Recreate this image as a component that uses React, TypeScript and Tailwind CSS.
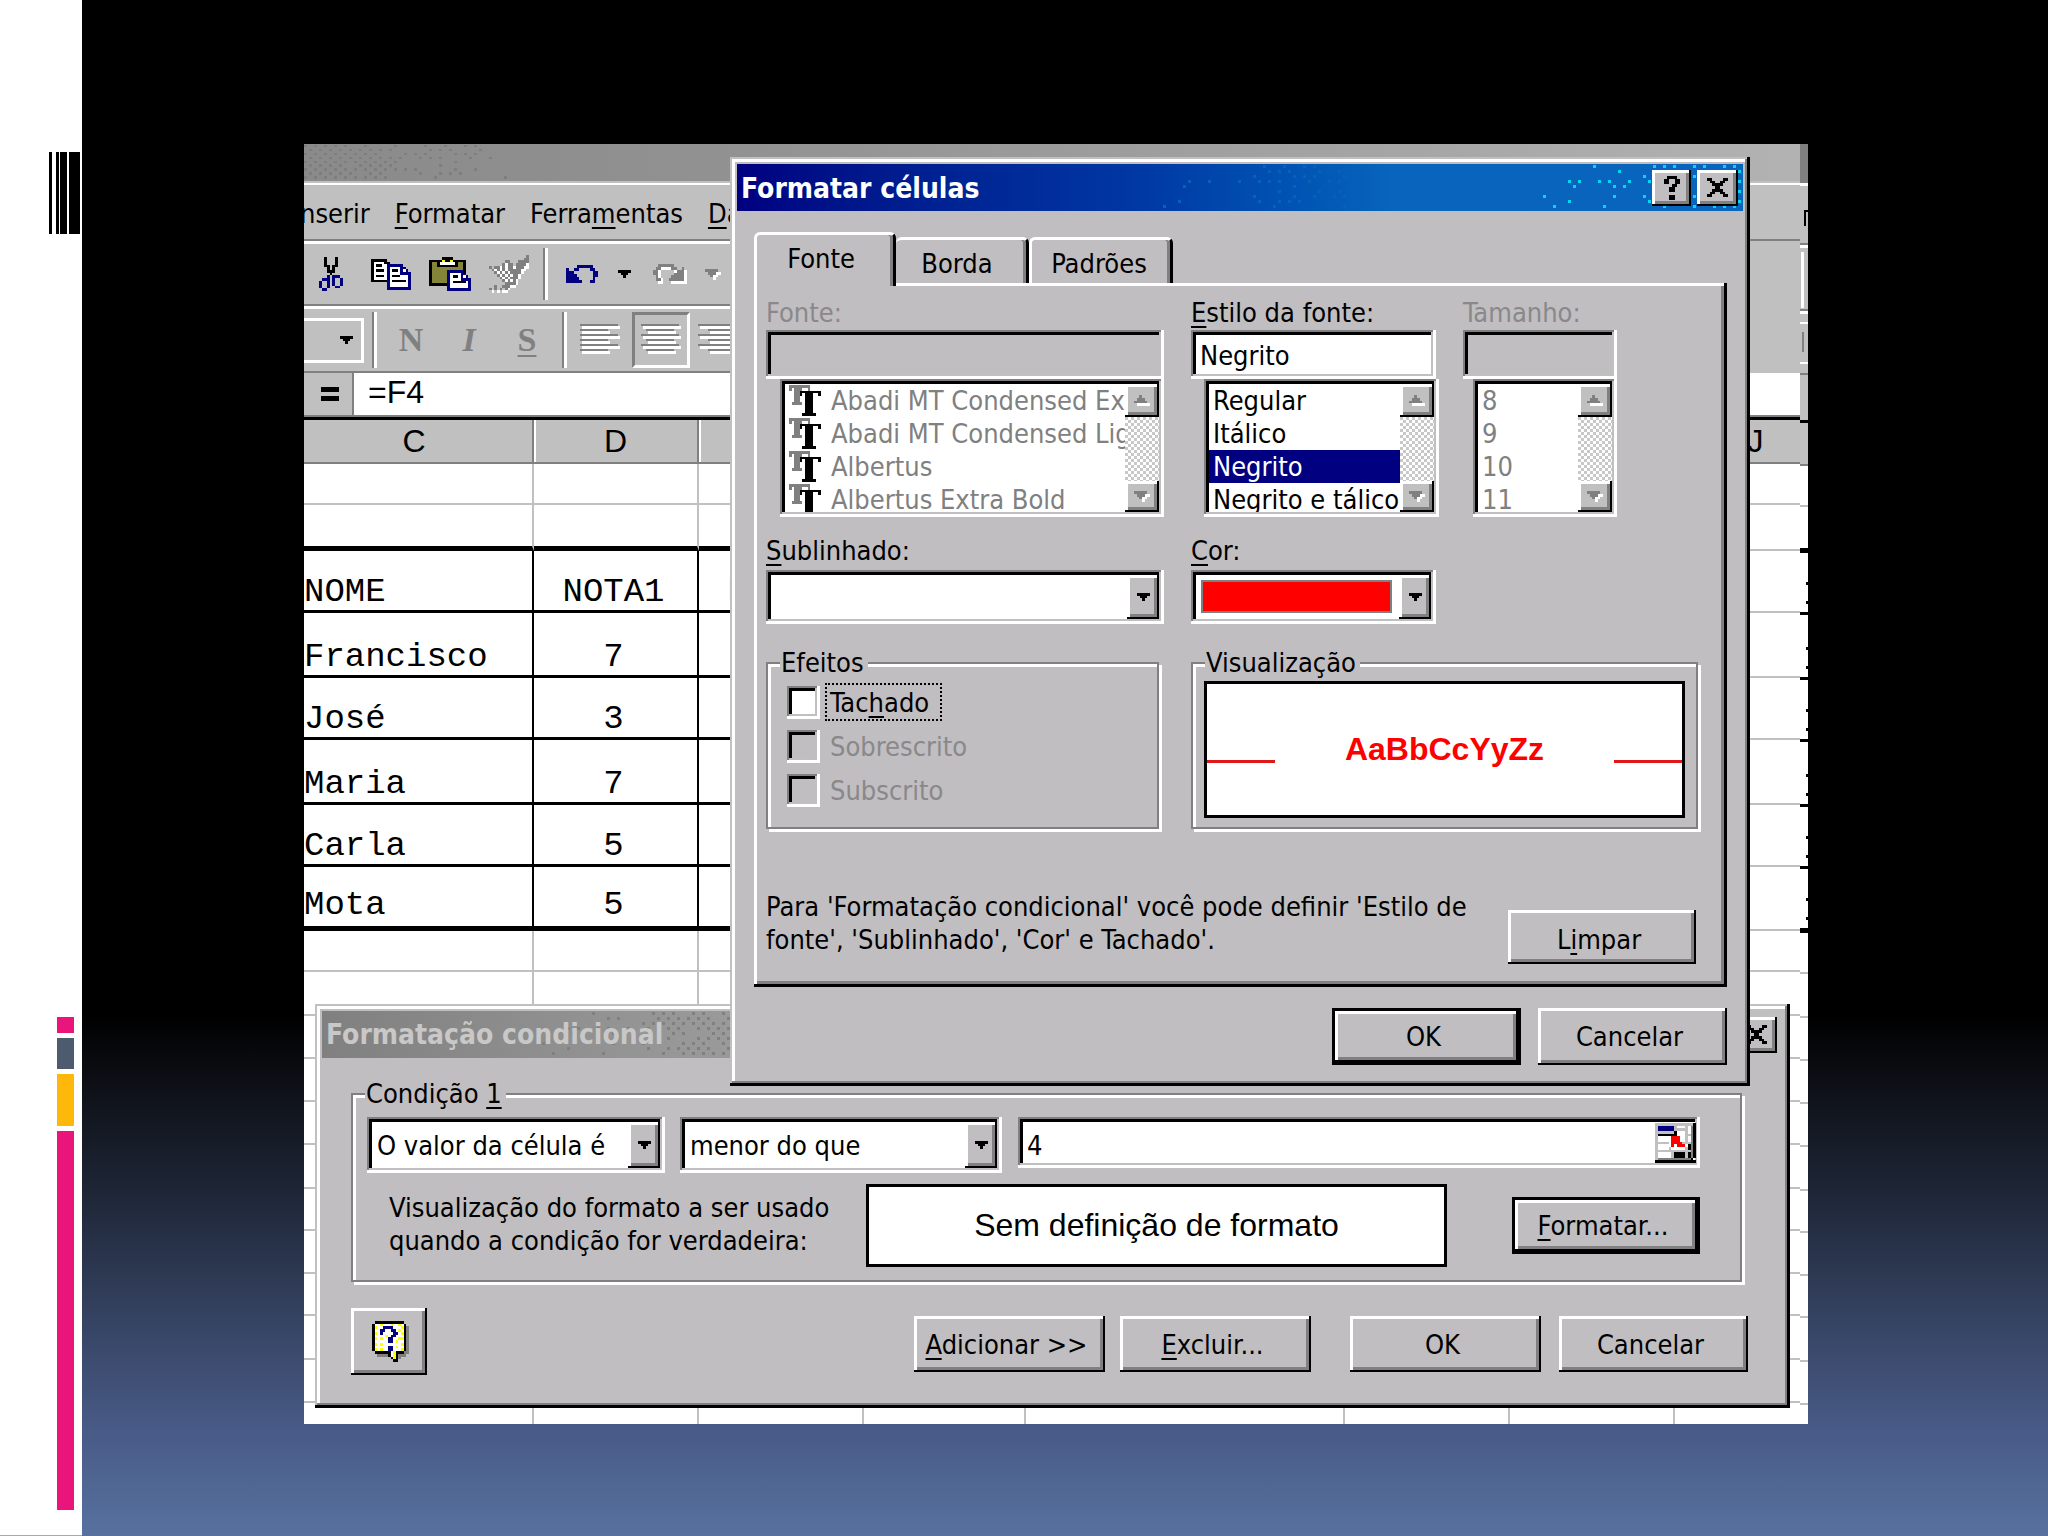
import type { ReactNode } from "react"

const raised = "shadow-[inset_-2px_-2px_0_#000,inset_3px_3px_0_#fff,inset_-5px_-5px_0_#808080]"
const sunken =
  "shadow-[inset_-3px_-3px_0_#fff,inset_2px_2px_0_#808080,inset_-5px_-5px_0_#c0c0c0,inset_5px_5px_0_#000]"
const windowEdge =
  "shadow-[inset_-3px_-3px_0_#000,inset_2px_2px_0_#c0c0c0,inset_-5px_-5px_0_#808080,inset_5px_5px_0_#fff]"
const ui = "font-['DejaVu_Sans_Condensed','Liberation_Sans',sans-serif] text-[27px] leading-[33px]"

const palette: Record<string, string> = {
  k: "#000000",
  w: "#ffffff",
  b: "#000080",
  g: "#808080",
  s: "#808080",
  l: "#c0c0c0",
  o: "#85853a",
  y: "#ffff00",
  r: "#ff0000",
}

const icons = {
  cut: [
    "..k...k..",
    "..k...k..",
    "..k...k..",
    "..kk.kk..",
    "...k.k...",
    "...kkk...",
    "....k....",
    "...b.bbb.",
    ".bbb.b..b",
    "b..b.b..b",
    "b..b.b..b",
    "b..b..bb.",
    ".bb......",
  ],
  copy: [
    "kkkkkk.........",
    "kwwwwkk........",
    "kwkkwwbbbbbb...",
    "kwwwwwbwwwwbb..",
    "kwkkkwbwkkwbwb.",
    "kwwwwwbwwwwbbbb",
    "kwkkkwbwkkkwwwb",
    "kwwwwwbwwwwwwwb",
    "kkkkkkbwkkkkkwb",
    "......bwwwwwwwb",
    "......bwwwwwwwb",
    "......bbbbbbbbb",
  ],
  paste: [
    ".....kkkk.......",
    "kkkkkykkykkkkk..",
    "kookwwwwwwkook..",
    "kookkkkkkkkook..",
    "kooooooooooook..",
    "koooooobbbbbbk..",
    "koooooobwwwwbb..",
    "koooooobwkkwbwb.",
    "koooooobwwwwbbbb",
    "koooooobwkkkkkwb",
    "kkkkkkkbwwwwwwwb",
    ".......bwwwwwwwb",
    ".......bbbbbbbbb",
  ],
  brush: [
    "..............g",
    ".............gg",
    "......gg...gggg",
    ".....gwgg.ggggw",
    "g.ggwgwggwgggww",
    ".gwgwgwgggggww.",
    "..gwgwgwggggw..",
    "...gwgwgwggw...",
    "....gwgwgggw...",
    ".....gwgwgw....",
    "......ggggw....",
    "..g..gggww.....",
    "g.g.g.gw.......",
    ".w.w.ww........",
  ],
  undo: ["....bbbbbb..", "b..bb....bb.", "bbb.......bb", "bbbb......bb", "bbbbb.....b.", "bbbbbb...bb."],
  redo: [
    "..gggggg.....",
    ".ggwwwwgg..g.",
    "ggw.....wgggw",
    "ggw.....ggggw",
    ".gw....gggggw",
    ".ggw..ggggggw",
    "..ww...wwwwww",
  ],
  down: ["kkkkk", ".kkk.", "..k.."],
  downOff: ["ggggg.", ".gggww", "..gww.", "...w.."],
  upOff: ["..g...", ".ggg..", "ggggg.", ".wwwww"],
  close: ["kk....kk", ".kk..kk.", "..kkkk..", "...kk...", "..kkkk..", ".kk..kk.", "kk....kk"],
  question: [".kkkk.", "kk..kk", "kk..kk", "...kk.", "..kk..", "..kk..", "......", "..kk..", "..kk.."],
  trueType: [
    "gggggggg....",
    "g.ggg..g....",
    "..ggkkkkkkkk",
    "..ggk.kkk..k",
    "..gg..kkk...",
    "..gg..kkk...",
    ".gggg.kkk...",
    "......kkk...",
    "......kkk...",
    "......kkk...",
    ".....kkkkk..",
  ],
  help: [
    ".kkkkkkkkkkk..",
    "kwwywwwywwywk.",
    "kywwbbbbwwwyks",
    "kwwbbwwbbwywks",
    "kywbwwwwbbwyks",
    "kwwwwywbbwwwks",
    "kywywwbbwwyyks",
    "kwwwwwbbwywwks",
    "kywywwwwwwwyks",
    "kwwwwwbbwywwks",
    "kywywwbbwwwyks",
    ".kkkkkkwykkkss",
    "..sssskwyksss.",
    ".......kyks...",
    "........kk....",
  ],
  range: [
    "llllllllllllllk",
    "lbbbbbblwwwlwsk",
    "lbbbbbblllllwsk",
    "lllllllkwwwlwsk",
    "lkkkkkkkwwwllsk",
    "lwwwwwrrrwwlwsk",
    "lwwwwwrrrwwlwsk",
    "lllllwrrrrlllsk",
    "lwwwwwrwrrrwksk",
    "lwwwwlwwwwwlksk",
    "lllllllllllllsk",
    "lwwwwwlkkkklksk",
    "lwwwwwlkkkklksk",
    "lssssssssssssk.",
    "kkkkkkkkkkkkkkk",
  ],
}

function Pixels({ name, className }: { name: keyof typeof icons; className: string }) {
  const rows = icons[name]
  return (
    <svg
      aria-hidden="true"
      viewBox={`0 0 ${rows[0].length} ${rows.length}`}
      preserveAspectRatio="none"
      shapeRendering="crispEdges"
      className={`shrink-0 ${className}`}
    >
      {rows.map((row, y) =>
        row
          .split("")
          .map((c, x) => (c === "." ? null : <rect key={`${x}-${y}`} x={x} y={y} width="1" height="1" fill={palette[c]} />)),
      )}
    </svg>
  )
}

function AlignIcon({ align }: { align: "left" | "center" | "right" }) {
  const lines = [38, 28, 38, 28, 38, 28]
  return (
    <svg aria-hidden="true" viewBox="0 0 40 32" shapeRendering="crispEdges" className="h-8 w-10 shrink-0">
      {lines.map((w, i) => {
        const x = align === "left" ? 0 : align === "right" ? 38 - w : (38 - w) / 2
        return (
          <g key={i}>
            <rect x={x + 2} y={i * 5 + 2} width={w} height="3" fill="#fff" />
            <rect x={x} y={i * 5} width={w} height="2" fill="#808080" />
          </g>
        )
      })}
    </svg>
  )
}

// 16-colour dithering of the caption gradients; density is given at both ends
function Dither({ from, to, color, className }: { from: number; to: number; color: string; className: string }) {
  const dots: ReactNode[] = []
  for (let y = 0; y < 9; y++) {
    for (let x = 0; x < 42; x++) {
      const s = Math.sin(x * 12.9898 + y * 78.233) * 43758.5453
      const noise = s - Math.floor(s)
      if ((x + y) % 2 === 0 && noise < from + ((to - from) * x) / 42) {
        dots.push(<rect key={`${x}-${y}`} x={x * 5} y={y * 5 + 1} width="3" height="3" fill={color} />)
      }
    }
  }
  return (
    <svg
      aria-hidden="true"
      viewBox="0 0 210 47"
      preserveAspectRatio="none"
      shapeRendering="crispEdges"
      className={`pointer-events-none absolute top-0 h-full ${className}`}
    >
      {dots}
    </svg>
  )
}

function Button({ children, isDefault, className = "" }: { children: ReactNode; isDefault?: boolean; className?: string }) {
  return (
    <button
      type="button"
      className={`flex items-center justify-center bg-[#c0bec0] pr-1.5 ${raised} ${isDefault ? "border-[3px] border-black" : ""} ${className}`}
    >
      {children}
    </button>
  )
}

function CaptionButton({ label, icon, className }: { label: string; icon: "close" | "question"; className: string }) {
  return (
    <button type="button" aria-label={label} className={`relative flex h-9 items-center justify-center bg-[#c0bec0] ${raised} ${className}`}>
      <Pixels name={icon} className={icon === "close" ? "h-[19px] w-[21px]" : "h-6 w-4"} />
    </button>
  )
}

function Combo({ id, options, className, children }: { id: string; options: string[]; className: string; children?: ReactNode }) {
  return (
    <div className={`relative bg-white ${sunken} ${className}`}>
      <select id={id} aria-label={id} className="size-full appearance-none bg-transparent pl-[10px] outline-none">
        {options.map((o) => (
          <option key={o}>{o}</option>
        ))}
      </select>
      {children}
      <span className={`pointer-events-none absolute top-[5px] right-[5px] bottom-[5px] flex w-8 items-center justify-center bg-[#c0bec0] ${raised}`}>
        <Pixels name="down" className="h-2 w-[13px]" />
      </span>
    </div>
  )
}

function ListBox({
  label,
  items,
  selected,
  disabled,
  icon,
  className,
}: {
  label: string
  items: string[]
  selected?: string
  disabled?: boolean
  icon?: boolean
  className: string
}) {
  return (
    <div className={`flex h-[138px] bg-white p-[5px] ${sunken} ${className}`}>
      <ul role="listbox" aria-label={label} aria-disabled={disabled} className="min-w-0 flex-1 overflow-hidden">
        {items.map((item) => (
          <li
            key={item}
            role="option"
            aria-selected={item === selected}
            className={`flex h-[33px] items-center gap-[10px] pl-1 whitespace-nowrap ${
              item === selected ? "bg-[#000080] text-white" : disabled ? "text-[#808080]" : ""
            }`}
          >
            {icon && <Pixels name="trueType" className="h-[31px] w-8" />}
            {item}
          </li>
        ))}
      </ul>
      <div className="flex w-[34px] flex-col justify-between bg-[repeating-conic-gradient(#c8c8c8_0_25%,#fff_0_50%)] bg-[length:6px_6px]">
        <button type="button" aria-label="Rolar para cima" className={`flex h-[33px] items-center justify-center bg-[#c0c0c0] ${raised}`}>
          <Pixels name="upOff" className="h-[11px] w-4" />
        </button>
        <button type="button" aria-label="Rolar para baixo" className={`flex h-[31px] items-center justify-center bg-[#c0c0c0] ${raised}`}>
          <Pixels name="downOff" className="h-[11px] w-4" />
        </button>
      </div>
    </div>
  )
}

function GroupBox({ legend, className, children }: { legend: ReactNode; className: string; children: ReactNode }) {
  return (
    <fieldset
      className={`min-w-0 border-2 border-[#808080] shadow-[inset_3px_3px_0_#fff,3px_3px_0_#fff] ${className}`}
    >
      <legend className="ml-3 bg-[#c0bec0] pr-1 pl-px">{legend}</legend>
      {children}
    </fieldset>
  )
}

function CheckRow({ label, disabled, focused }: { label: ReactNode; disabled?: boolean; focused?: boolean }) {
  return (
    <label className={`flex h-11 items-center gap-[5px] ${disabled ? "text-[#8a888a]" : ""}`}>
      <input
        type="checkbox"
        disabled={disabled}
        className={`size-[33px] appearance-none ${disabled ? "bg-[#c0bec0]" : "bg-white"} ${sunken}`}
      />
      <span className={`border-2 pt-px pr-[11px] pl-[3px] ${focused ? "border-dotted border-black" : "border-transparent"}`}>{label}</span>
    </label>
  )
}

const Separator = ({ className }: { className: string }) => (
  <span className={`w-[5px] shrink-0 self-stretch border-r-[3px] border-l-2 border-r-white border-l-[#808080] ${className}`} />
)

const cellRows = [
  { h: "h-[41px]" },
  { h: "h-[46px]", thick: true },
  { h: "h-[62px]", data: ["NOME", "NOTA1", "NOTA2"] },
  { h: "h-[65px]", data: ["Francisco", "7", ""] },
  { h: "h-[62px]", data: ["José", "3", ""] },
  { h: "h-[65px]", data: ["Maria", "7", ""] },
  { h: "h-[62px]", data: ["Carla", "5", ""] },
  { h: "h-[64px]", data: ["Mota", "5", ""], thick: true },
  { h: "h-[41px]" },
  { h: "h-[44px]" },
  { h: "h-[43px]" },
  { h: "h-[43px]" },
  { h: "h-[43px]" },
  { h: "h-[44px]" },
  { h: "h-[42px]" },
  { h: "h-[43px]" },
  { h: "h-[42px]" },
  { h: "h-[44px]" },
  { h: "h-[43px]" },
]

function Sheet() {
  const columns = ["C", "D", "E", "F", "G", "H", "I", "J"]
  return (
    <table className="w-full table-fixed border-separate border-spacing-0 bg-white">
      <colgroup>
        <col className="w-[230px]" />
        <col className="w-[165px]" />
        <col className="w-[165px]" />
        <col className="w-[162px]" />
        <col className="w-[319px]" />
        <col className="w-[165px]" />
        <col className="w-[165px]" />
        <col />
      </colgroup>
      <thead>
        <tr className="h-11">
          {columns.map((c) => (
            <th
              key={c}
              scope="col"
              className={`border-r-2 border-b-2 border-[#808080] bg-[#c0c0c0] p-0 font-['Liberation_Sans',sans-serif] text-[32px] leading-8 font-normal last:border-r-0 last:pl-9 ${
                c === "C" ? "pr-2" : "shadow-[inset_2px_0_0_#fff]"
              }`}
            >
              {c}
            </th>
          ))}
        </tr>
      </thead>
      <tbody className="font-['Liberation_Mono',monospace] text-[34px] leading-[34px]">
        {cellRows.map((row, r) => (
          <tr key={r} className={row.h}>
            {columns.map((c, i) => {
              const last = i === columns.length - 1
              const bottom = last
                ? "border-b-2 border-b-[#c0c0c0]"
                : row.thick
                  ? "border-b-[5px] border-b-black"
                  : row.data
                    ? "border-b-3 border-b-black"
                    : "border-b-2 border-b-[#c0c0c0]"
              const right = last ? "" : row.data ? "border-r-2 border-r-black" : "border-r-2 border-r-[#c0c0c0]"
              return (
                <td
                  key={c}
                  className={`p-0 align-bottom ${row.thick ? "pb-1" : "pb-px"} ${i ? "pr-1 text-center" : ""} ${bottom} ${right}`}
                >
                  {row.data?.[i]}
                </td>
              )
            })}
          </tr>
        ))}
        <tr className="h-[21px]">
          {columns.map((c) => (
            <td key={c} className="border-r-2 border-[#c0c0c0] p-0 last:border-r-0" />
          ))}
        </tr>
      </tbody>
    </table>
  )
}

// the sliver of the window that shows past the last column
function EdgeStrip() {
  return (
    <div aria-hidden="true" className="flex w-2 shrink-0 flex-col overflow-hidden bg-white">
      <div className="h-[39px] bg-[#808080]" />
      <div className="flex h-[62px] flex-col items-end border-t-3 border-b-2 border-t-white border-b-[#808080] bg-[#c0c0c0] pt-6">
        <span className="h-4 w-1 border-t-2 border-l-2 border-black" />
      </div>
      <div className="h-[66px] border-t-3 border-b-2 border-t-white border-b-[#808080] bg-[#c0c0c0] pt-1 pl-px">
        <span className="block h-14 w-[3px] bg-white" />
      </div>
      <div className="h-[64px] border-t-3 border-b-2 border-t-white border-b-[#808080] bg-[#c0c0c0] pt-2">
        <span className="block h-[42px] border-y-2 border-white pt-2">
          <span className="block h-5 w-1 border-r-2 border-[#808080]" />
        </span>
      </div>
      <div className="h-[48px] border-b-3 border-black bg-[#c0c0c0]" />
      <div className="h-[43px] border-b-2 border-[#808080] bg-[#c0c0c0]" />
      {cellRows.map((row, i) => (
        <div
          key={i}
          className={`flex flex-col items-end justify-end gap-4 pb-2 ${row.h} ${
            row.thick ? "border-b-[5px] border-black" : row.data ? "border-b-3 border-black" : "border-b-2 border-[#c0c0c0]"
          }`}
        >
          {row.data && <span className="h-[3px] w-0.5 bg-black" />}
          {row.data && <span className="h-[3px] w-0.5 bg-black" />}
        </div>
      ))}
    </div>
  )
}

function Excel() {
  return (
    <div className={`min-w-0 flex-1 overflow-hidden bg-[#c0c0c0] ${ui}`}>
      <div className="relative h-[39px] border-b-2 border-[#c0c0c0] bg-linear-to-r from-[#8a8a8a] via-[#929292] via-30% to-[#b2b2b2]">
        <Dither from={1.2} to={0} color="#7e7e7e" className="left-0 w-[210px]" />
      </div>
      <nav className="-ml-1 flex h-[58px] items-center gap-[25px] border-t-2 border-b-2 border-t-white border-b-[#808080] pt-0.5">
        <button type="button">nserir</button>
        <button type="button">
          <u>F</u>ormatar
        </button>
        <button type="button">
          Ferra<u>m</u>entas
        </button>
        <button type="button">
          <u>D</u>ados
        </button>
      </nav>
      <div className="mr-24 flex h-[65px] items-center border-t-3 border-b-2 border-t-white border-b-[#808080] pl-[15px]">
        <button type="button" aria-label="Recortar">
          <Pixels name="cut" className="h-[34px] w-6" />
        </button>
        <button type="button" aria-label="Copiar" className="ml-7">
          <Pixels name="copy" className="h-[31px] w-10" />
        </button>
        <button type="button" aria-label="Colar" className="ml-[18px]">
          <Pixels name="paste" className="h-[34px] w-[42px]" />
        </button>
        <button type="button" aria-label="Pincel" disabled className="ml-[18px]">
          <Pixels name="brush" className="h-[38px] w-10" />
        </button>
        <Separator className="my-1 ml-[14px]" />
        <button type="button" aria-label="Desfazer" className="ml-[18px]">
          <Pixels name="undo" className="h-[18px] w-8" />
        </button>
        <Pixels name="down" className="ml-5 h-2 w-[13px]" />
        <button type="button" aria-label="Refazer" disabled className="ml-[22px]">
          <Pixels name="redo" className="h-5 w-[34px]" />
        </button>
        <Pixels name="downOff" className="ml-[18px] h-[11px] w-4" />
      </div>
      <div className="mr-24 flex h-[67px] items-center border-t-3 border-b-2 border-t-white border-b-[#808080]">
        <button type="button" aria-label="Tamanho" className="flex h-[45px] w-[60px] items-center justify-end border-[3px] border-l-0 border-white pr-2">
          <Pixels name="down" className="h-2 w-[13px]" />
        </button>
        <Separator className="my-[3px] ml-2" />
        <div className="flex items-center gap-8 pl-[21px] font-['Liberation_Serif',serif] text-[34px] leading-[34px] font-bold text-[#808080] [text-shadow:3px_3px_0_#fff]">
          <button type="button" className="w-[26px]">
            N
          </button>
          <button type="button" className="w-[26px] italic">
            I
          </button>
          <button type="button" className="w-[26px] underline decoration-2 underline-offset-4">
            S
          </button>
        </div>
        <Separator className="my-[3px] ml-[22px]" />
        <button type="button" aria-label="Alinhar à esquerda" className="ml-[13px]">
          <AlignIcon align="left" />
        </button>
        <button
          type="button"
          aria-label="Centralizar"
          className="ml-3 flex h-14 w-[58px] items-center justify-center border-[3px] border-t-[#808080] border-r-white border-b-white border-l-[#808080]"
        >
          <AlignIcon align="center" />
        </button>
        <button type="button" aria-label="Alinhar à direita" className="ml-2">
          <AlignIcon align="right" />
        </button>
      </div>
      <div className="flex h-[47px] border-b-[3px] border-black">
        <button
          type="button"
          aria-label="Editar fórmula"
          className="flex w-[50px] items-center justify-end border-r-2 border-b-2 border-[#808080] pr-[13px]"
        >
          <span className="h-[14px] w-[18px] border-y-[5px] border-black" />
        </button>
        <input
          aria-label="Fórmula"
          defaultValue="=F4"
          className="min-w-0 flex-1 border-b-2 border-[#808080] bg-white pb-1 pl-[14px] font-['Liberation_Sans',sans-serif] text-[32px] leading-8 outline-none"
        />
      </div>
      <Sheet />
    </div>
  )
}

function ConditionalDialog() {
  return (
    <section
      aria-label="Formatação condicional"
      className={`absolute top-[860px] left-[11px] w-[1475px] bg-[#c0bec0] p-[7px] pb-[33px] ${windowEdge} ${ui}`}
    >
      <header className="relative flex h-[47px] items-center justify-between bg-linear-to-r from-[#808080] via-[#989898] via-25% to-[#c0c0c0] pr-[6px] pl-1">
        <Dither from={0} to={1} color="#808080" className="left-[210px] w-[210px]" />
        <h2 className="relative text-[28px] font-bold text-[#c8c8c8]">Formatação condicional</h2>
        <CaptionButton label="Fechar" icon="close" className="w-[41px]" />
      </header>
      <div className="mt-[19px] mr-[41px] ml-[29px]">
        <GroupBox
          className="h-[205px]"
          legend={
            <>
              Condição <u>1</u>
            </>
          }
        >
          <div className="mt-[7px] flex items-start pl-[14px]">
            <Combo id="Tipo" options={["O valor da célula é", "A fórmula é"]} className="h-14 w-[298px]" />
            <Combo id="Operador" options={["menor do que", "maior do que"]} className="ml-[15px] h-14 w-[322px]" />
            <div className={`ml-4 flex h-[51px] w-[682px] items-center bg-white pr-1 ${sunken}`}>
              <input aria-label="Valor" defaultValue="4" className="min-w-0 flex-1 bg-transparent pt-1.5 pl-[9px] outline-none" />
              <button type="button" aria-label="Selecionar intervalo">
                <Pixels name="range" className="h-10 w-[41px]" />
              </button>
            </div>
          </div>
          <div className="mt-[11px] flex items-start">
            <p className="mt-[7px] w-[476px] pl-9 whitespace-nowrap">
              Visualização do formato a ser usado
              <br />
              quando a condição for verdadeira:
            </p>
            <div className="ml-[37px] flex h-[83px] w-[581px] items-center justify-center border-[3px] border-black bg-white font-['Liberation_Sans',sans-serif] text-[32px]">
              Sem definição de formato
            </div>
            <Button isDefault className="mt-[13px] ml-[65px] h-[57px] w-[188px]">
              <span>
                <u>F</u>ormatar...
              </span>
            </Button>
          </div>
        </GroupBox>
      </div>
      <footer className="mt-[26px] mr-[35px] ml-[29px] flex">
        <Button className="h-[67px] w-[76px] pl-2">
          <Pixels name="help" className="h-[41px] w-[37px]" />
          <span className="sr-only">Ajuda</span>
        </Button>
        <div className="mt-2 ml-auto flex h-14">
          <Button className="w-[191px]">
            <span>
              <u>A</u>dicionar &gt;&gt;
            </span>
          </Button>
          <Button className="ml-[15px] w-[191px]">
            <span>
              <u>E</u>xcluir...
            </span>
          </Button>
          <Button className="ml-[39px] w-[191px]">OK</Button>
          <Button className="ml-[18px] w-[189px]">Cancelar</Button>
        </div>
      </footer>
    </section>
  )
}

function Tabs() {
  const tab = "rounded-t-md border-t-[3px] border-r-[3px] border-t-white border-r-black bg-[#c0bec0] shadow-[inset_-3px_0_0_#808080]"
  return (
    <div role="tablist" className="flex h-[51px] items-end">
      <button
        type="button"
        role="tab"
        aria-selected="true"
        className={`relative -mb-[3px] h-[54px] w-[142px] border-l-[3px] border-l-white pr-2 pb-1 ${tab}`}
      >
        Fonte
      </button>
      <button type="button" role="tab" aria-selected="false" className={`h-[46px] w-[133px] pt-1 pr-2 ${tab}`}>
        Borda
      </button>
      <button type="button" role="tab" aria-selected="false" className={`h-[46px] w-[144px] border-l-[3px] border-l-white pt-1 pr-1 ${tab}`}>
        Padrões
      </button>
    </div>
  )
}

function FormatCellsDialog() {
  return (
    <section
      aria-label="Formatar células"
      className={`absolute top-[13px] left-[426px] w-[1020px] bg-[#c0bec0] p-[7px] pb-[21px] ${windowEdge} ${ui}`}
    >
      <header className="relative flex h-[47px] items-center bg-linear-to-r from-[#000080] via-[#0038a4] via-40% to-[#0864bc] to-65% pr-[5px] pl-1">
        <Dither from={0} to={0.5} color="#0860b8" className="right-[390px] w-[210px]" />
        <Dither from={0} to={0.9} color="#00d8f4" className="right-0 w-[210px]" />
        <h2 className="relative pt-0.5 text-[28px] font-bold text-white">Formatar células</h2>
        <CaptionButton label="Ajuda" icon="question" className="ml-auto w-[39px]" />
        <CaptionButton label="Fechar" icon="close" className="ml-[6px] w-[41px]" />
      </header>

      <div className="mt-[21px] mr-4 ml-[17px]">
        <Tabs />
        <div className="px-[12px] pt-[13px] pb-[23px] shadow-[inset_-3px_-3px_0_#000,inset_3px_3px_0_#fff,inset_-6px_-6px_0_#808080]">
          <div className="flex">
            <div className="w-[398px]">
              <label htmlFor="fonte" className="block text-[#8a888a]">
                Fonte:
              </label>
              <input id="fonte" disabled className={`mt-px block h-[49px] w-full ${sunken}`} />
              <ListBox
                label="Fontes"
                disabled
                icon
                items={["Abadi MT Condensed Extra Bold", "Abadi MT Condensed Light", "Albertus", "Albertus Extra Bold"]}
                className="ml-[14px]"
              />
            </div>
            <div className="ml-[27px] w-[248px]">
              <label htmlFor="estilo" className="block">
                <u>E</u>stilo da fonte:
              </label>
              <input id="estilo" defaultValue="Negrito" className={`mt-px block h-[49px] w-[245px] bg-white pt-0.5 pl-[9px] outline-none ${sunken}`} />
              <ListBox
                label="Estilos"
                selected="Negrito"
                items={["Regular", "Itálico", "Negrito", "Negrito e tálico"]}
                className="ml-[13px]"
              />
            </div>
            <div className="ml-[24px] w-[154px]">
              <label htmlFor="tamanho" className="block text-[#8a888a]">
                Tamanho:
              </label>
              <input id="tamanho" disabled className={`mt-px block h-[49px] w-full ${sunken}`} />
              <ListBox label="Tamanhos" disabled items={["8", "9", "10", "11"]} className="ml-[10px]" />
            </div>
          </div>

          <div className="mt-[17px] flex">
            <div className="w-[398px]">
              <label htmlFor="sublinhado" className="block">
                <u>S</u>ublinhado:
              </label>
              <Combo id="sublinhado" options={[""]} className="mt-[3px] h-[54px]" />
            </div>
            <div className="ml-[27px] w-[245px]">
              <label htmlFor="cor" className="block">
                <u>C</u>or:
              </label>
              <Combo id="cor" options={[""]} className="mt-[3px] h-[54px]">
                <span className="pointer-events-none absolute top-[10px] right-11 bottom-[11px] left-[10px] border-2 border-[#808080] bg-[#ff0000]" />
              </Combo>
            </div>
          </div>

          <div className="mt-[22px] flex h-[183px]">
            <GroupBox legend="Efeitos" className="w-[393px]">
              <div className="mt-[1px] pl-[19px]">
                <CheckRow
                  focused
                  label={
                    <>
                      Tac<u>h</u>ado
                    </>
                  }
                />
                <CheckRow disabled label="Sobrescrito" />
                <CheckRow disabled label="Subscrito" />
              </div>
            </GroupBox>
            <GroupBox legend="Visualização" className="ml-8 w-[507px]">
              <div className="mt-[2px] mr-[11px] ml-[11px] flex h-[137px] items-center justify-between border-[3px] border-black bg-white">
                <span className="mt-6 h-[3px] w-[68px] bg-[#e01818]" />
                <span className="font-['Liberation_Sans',sans-serif] text-[32px] font-bold text-[#ff0000]">AaBbCcYyZz</span>
                <span className="mt-6 h-[3px] w-[68px] bg-[#e01818]" />
              </div>
            </GroupBox>
          </div>

          <div className="mt-[61px] flex h-[74px] items-end justify-between">
            <p className="self-start whitespace-nowrap">
              Para 'Formatação condicional' você pode definir 'Estilo de
              <br />
              fonte', 'Sublinhado', 'Cor' e Tachado'.
            </p>
            <Button className="mr-[19px] h-[54px] w-[188px] pt-1">
              <span>
                L<u>i</u>mpar
              </span>
            </Button>
          </div>
        </div>

        <footer className="mt-[21px] flex h-[57px] justify-end gap-[17px]">
          <Button isDefault className="w-[189px]">
            OK
          </Button>
          <Button className="w-[189px]">Cancelar</Button>
        </footer>
      </div>
    </section>
  )
}

function Rail() {
  return (
    <aside aria-hidden="true" className="flex w-[82px] shrink-0 flex-col border-b border-[#a8a8a8] bg-white pt-[152px]">
      <div className="ml-[49px] flex h-[82px]">
        <span className="w-[3px] bg-black" />
        <span className="ml-1 w-[3px] bg-black" />
        <span className="ml-px w-[7px] bg-black" />
        <span className="ml-0.5 w-[11px] bg-black" />
      </div>
      <div className="mt-[783px] ml-[57px] flex w-[17px] flex-col gap-[5px]">
        <span className="h-4 bg-[#ea157a]" />
        <span className="h-[31px] bg-[#4e5b6f]" />
        <span className="h-[52px] bg-[#feb80a]" />
        <span className="h-[379px] bg-[#ea157a]" />
      </div>
    </aside>
  )
}

export default function App() {
  return (
    <div className="flex min-h-screen bg-[linear-gradient(#000_66%,#0e1118_71%,#1f2738_78%,#33405d_85%,#485a86_93%,#57719f)] text-black [&_u]:decoration-2 [&_u]:underline-offset-4">
      <Rail />
      <main className="relative mt-[144px] mr-60 mb-28 ml-[222px] flex min-w-0 flex-1 self-start overflow-hidden">
        <Excel />
        <EdgeStrip />
        <ConditionalDialog />
        <FormatCellsDialog />
      </main>
    </div>
  )
}
